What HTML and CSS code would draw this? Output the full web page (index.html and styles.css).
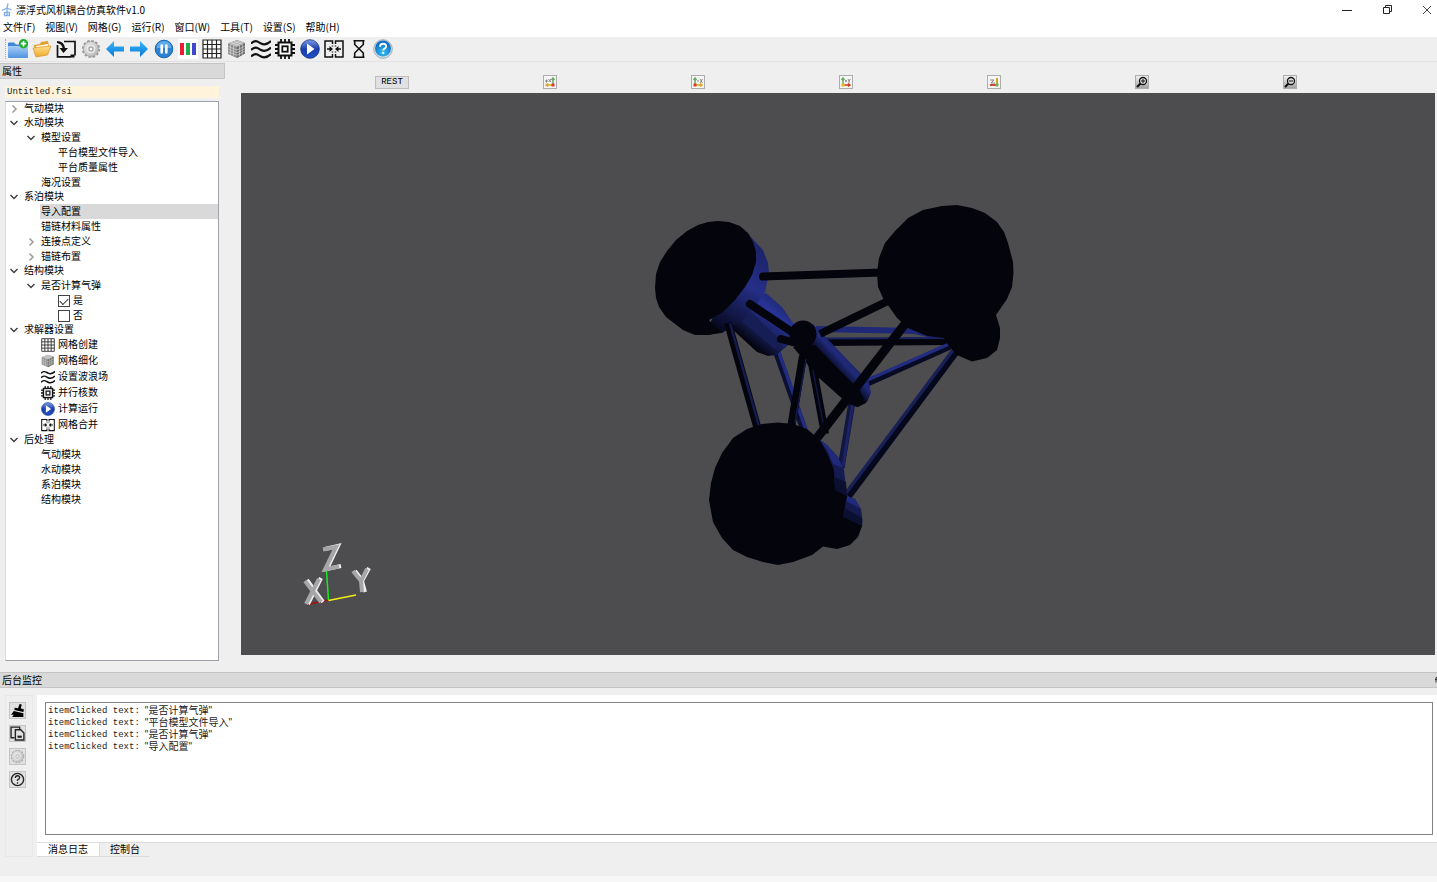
FILE: index.html
```html
<!DOCTYPE html>
<html lang="zh-CN">
<head>
<meta charset="utf-8">
<title>漂浮式风机耦合仿真软件v1.0</title>
<link rel="stylesheet" href="styles.css">
</head>
<body>
<svg class="sprite" aria-hidden="true">
  <defs>
    <linearGradient id="blueV" x1="0" y1="0" x2="0" y2="1"><stop offset="0" stop-color="#a9cdf4"/><stop offset="1" stop-color="#4e93e0"/></linearGradient>
    <linearGradient id="arrowV" x1="0" y1="0" x2="0" y2="1"><stop offset="0" stop-color="#3db4f7"/><stop offset="1" stop-color="#0679d8"/></linearGradient>
    <linearGradient id="goldV" x1="0" y1="0" x2="0" y2="1"><stop offset="0" stop-color="#ffe08a"/><stop offset="1" stop-color="#eda92b"/></linearGradient>
    <linearGradient id="playV" x1="0" y1="0" x2="0" y2="1"><stop offset="0" stop-color="#7f9ee8"/><stop offset=".5" stop-color="#1b3fae"/><stop offset="1" stop-color="#1d50c4"/></linearGradient>
    <linearGradient id="gearV" x1="0" y1="0" x2="1" y2="1"><stop offset="0" stop-color="#ececec"/><stop offset="1" stop-color="#b4b4b4"/></linearGradient>
    <radialGradient id="helpV" cx=".5" cy=".75" r=".6"><stop offset="0" stop-color="#39c4f5"/><stop offset="1" stop-color="#0d6fc4"/></radialGradient>
  </defs>
  <symbol id="i-new" viewBox="0 0 20 20">
    <path d="M0 4.500q0-1 1-1h5l2 2h10q1 0 1 1v3H0z" fill="#3f86d8"/>
    <rect x="0" y="7" width="20" height="12" rx="1" fill="url(#blueV)"/>
    <circle cx="15.500" cy="4.700" r="4.700" fill="#1fae2c"/><path d="M15.500 2v5.400M12.800 4.700h5.400" stroke="#fff" stroke-width="1.700"/>
  </symbol>
  <symbol id="i-open" viewBox="0 0 20 20">
    <path d="M2 6l6-1 1-2 7-1 1 6-2 8H3z" fill="#e3a02f"/><path d="M4 7l12-2v5H4z" fill="#fff7dc"/>
    <path d="M1 9l13-1.500L19 7l-3.500 9L4 18z" fill="url(#goldV)" stroke="#d9942a" stroke-width=".7"/>
  </symbol>
  <symbol id="i-save" viewBox="0 0 20 20">
    <path d="M8 2.500h11v14M1.500 6v11.800H15" fill="none" stroke="#111" stroke-width="1.700"/><path d="M14.500 15.500h4v3h-4z" fill="#111"/>
    <path d="M1 2q7 0 8 7h3l-4.500 5L3.500 9h3Q6 5 1 4z" fill="#111"/>
  </symbol>
  <symbol id="i-gear" viewBox="0 0 20 20">
    <circle cx="10" cy="10" r="8.200" fill="none" stroke="#9a9a9a" stroke-width="1.800" stroke-dasharray="2.600 1.693"/>
    <circle cx="10" cy="10" r="7.500" fill="url(#gearV)" stroke="#979797" stroke-width=".7"/><circle cx="10" cy="10" r="4" fill="#d6d6d6" stroke="#f4f4f4" stroke-width=".8"/><circle cx="10" cy="10" r="2" fill="#fafafa" stroke="#808080" stroke-width=".8"/>
  </symbol>
  <symbol id="i-back" viewBox="0 0 20 20"><path d="M1 10l8-8v5.500h10v5H9V18z" fill="url(#arrowV)"/></symbol>
  <symbol id="i-next" viewBox="0 0 20 20"><path d="M19 10l-8-8v5.500H1v5h10V18z" fill="url(#arrowV)"/></symbol>
  <symbol id="i-pause" viewBox="0 0 20 20"><circle cx="10" cy="10" r="8.800" fill="#2b83d2" stroke="#1768b6"/><path d="M2.500 9a7.500 7 0 0 1 15 0z" fill="#61aae8"/><path d="M7.700 6.500v7M12.300 6.500v7" stroke="#fff" stroke-width="2.600" stroke-linecap="round"/></symbol>
  <symbol id="i-bars" viewBox="0 0 20 20"><path fill="#fff" d="M0 0h20v20H0z"/><path fill="#ed1c2e" d="M2 4h4v12H2z"/><path fill="#22ad4c" d="M8 4h4v12H8z"/><path fill="#3f48cc" d="M14 4h4v12h-4z"/></symbol>
  <symbol id="i-grid" viewBox="0 0 20 20"><path fill="#fff" d="M.5.500h19v19H.5z"/><path d="M1 1h18v18H1zM5.500 1v18M10 1v18M14.500 1v18M1 5.500h18M1 10h18M1 14.500h18" fill="none" stroke="#222" stroke-width="1.200"/></symbol>
  <symbol id="i-cube" viewBox="0 0 20 20"><path d="M1 4.500L10 1l8 3v10.500L10 19l-9-4z" fill="#8d8d8d"/><path d="M1 4.500L10 1l8 3-8 4z" fill="#b4b4b4"/><path d="M10 8l8-4v10.500L10 19z" fill="#6d6d6d"/><path d="M1 7.300l9 3.700 8-4M1 10l9 3.700 8-4M1 12.700l9 3.600 8-4.300M3.500 5.500v10.300M6.500 6.700v10.500M12.500 7v10.500M15.300 5.500V16M4 3.500L13 7M7 2.300l8.500 3.200M4 5.500l9-3.500M7 6.700L15.700 3" fill="none" stroke="#dcdcdc" stroke-width=".6"/></symbol>
  <symbol id="i-wave" viewBox="0 0 20 20"><g fill="none" stroke="#111" stroke-width="2.200"><path d="M0 4.500C5 0 7 3 10 4.500S16 6 20 2"/><path d="M0 11C5 6.500 7 9.500 10 11s6 1.500 10-2.500"/><path d="M0 17.500C5 13 7 16 10 17.500s6 1.500 10-2.500"/></g></symbol>
  <symbol id="i-chip" viewBox="0 0 20 20"><path d="M6 0v20M10 0v20M14 0v20M0 6h20M0 10h20M0 14h20" stroke="#111" stroke-width="1.800"/><rect x="3.500" y="3.500" width="13" height="13" fill="#fff" stroke="#111" stroke-width="2"/><rect x="7.300" y="7.300" width="5.400" height="5.400" fill="#fff" stroke="#111" stroke-width="1.800"/></symbol>
  <symbol id="i-play" viewBox="0 0 20 20"><circle cx="10" cy="10" r="9.300" fill="url(#playV)" stroke="#16307c" stroke-width=".8"/><path d="M7 4.500l7.500 5.500L7 15.500z" fill="#fff"/></symbol>
  <symbol id="i-merge" viewBox="0 0 20 20"><path d="M8.500 5V2H1v16h7.500v-3M11.500 5V2H19v16h-7.500v-3M8.500 6.500v1M11.500 6.500v1M8.500 12.500v1M11.500 12.500v1" fill="none" stroke="#111" stroke-width="1.500"/><path d="M3 10h3M17 10h-3" stroke="#111" stroke-width="1.600"/><path d="M5.500 7L9 10l-3.500 3zM14.500 7L11 10l3.500 3z" fill="#111"/></symbol>
  <symbol id="i-hour" viewBox="0 0 20 20"><path d="M4.500 1.700h11M4.500 18.300h11M5.700 2v3.500L14.300 14v4M14.300 2v3.500L5.700 14v4" fill="none" stroke="#111" stroke-width="1.600"/></symbol>
  <symbol id="i-help" viewBox="0 0 20 20"><circle cx="10" cy="10" r="9.300" fill="#dce4e9" stroke="#8b9aa5" stroke-width=".8"/><circle cx="10" cy="9.500" r="8" fill="url(#helpV)"/><path d="M7 7.800q0-3 3.200-3t3 2.500q0 1.700-2 2.500-1 .5-1 1.700M10.200 13v2" fill="none" stroke="#fff" stroke-width="1.900"/></symbol>
  <symbol id="i-down" viewBox="0 0 10 10"><path d="M1.500 3L5 6.500 8.500 3" fill="none" stroke="#404040" stroke-width="1.500"/></symbol>
  <symbol id="i-right" viewBox="0 0 10 10"><path d="M3.500 1.500L7 5 3.500 8.500" fill="none" stroke="#9a9a9a" stroke-width="1.500"/></symbol>
</svg>

<header class="titlebar">
  <svg class="logo" viewBox="0 0 12 14" aria-hidden="true"><g fill="none" stroke="#82aee6" stroke-width="1.300"><path d="M6 5v7M6 5l1-4.500M6 5L1 7.500M6 5l4.500 2M3 12.500h6M3.500 9v3M8.500 9v3M3.500 9.500h5"/></g></svg>
  <h1 class="title">漂浮式风机耦合仿真软件v1.0</h1>
  <div class="window-buttons">
    <button aria-label="最小化"><svg viewBox="0 0 10 10"><path d="M0 5.500h10" stroke="#222"/></svg></button>
    <button aria-label="还原"><svg viewBox="0 0 10 10"><path d="M1.500 2.500h6v6h-6zM3.500 2.500v-2h6v6h-2" fill="none" stroke="#222"/></svg></button>
    <button aria-label="关闭"><svg viewBox="0 0 10 10"><path d="M1 1l8 8M9 1L1 9" stroke="#444"/></svg></button>
  </div>
</header>

<nav class="menubar" aria-label="菜单">
  <button>文件(F)</button><button>视图(V)</button><button>网格(G)</button><button>运行(R)</button><button>窗口(W)</button><button>工具(T)</button><button>设置(S)</button><button>帮助(H)</button>
</nav>

<div class="toolbar" role="toolbar" aria-label="工具栏">
  <div class="tool-group"><button aria-label="新建"><svg><use href="#i-new"/></svg></button><button aria-label="打开"><svg><use href="#i-open"/></svg></button><button aria-label="保存"><svg><use href="#i-save"/></svg></button></div>
  <div class="tool-group"><button aria-label="设置"><svg><use href="#i-gear"/></svg></button><button aria-label="后退"><svg><use href="#i-back"/></svg></button><button aria-label="前进"><svg><use href="#i-next"/></svg></button></div>
  <div class="tool-group"><button aria-label="暂停"><svg><use href="#i-pause"/></svg></button><button aria-label="颜色"><svg><use href="#i-bars"/></svg></button><button aria-label="网格创建"><svg><use href="#i-grid"/></svg></button></div>
  <div class="tool-group"><button aria-label="网格细化"><svg><use href="#i-cube"/></svg></button><button aria-label="设置波浪场"><svg><use href="#i-wave"/></svg></button><button aria-label="并行核数"><svg><use href="#i-chip"/></svg></button></div>
  <div class="tool-group"><button aria-label="计算运行"><svg><use href="#i-play"/></svg></button><button aria-label="网格合并"><svg><use href="#i-merge"/></svg></button></div>
  <div class="tool-group"><button aria-label="等待"><svg><use href="#i-hour"/></svg></button><button aria-label="帮助"><svg><use href="#i-help"/></svg></button></div>
</div>

<main class="workspace">
  <aside class="properties">
    <h2 class="dock-title">属性</h2>
    <div class="properties-body">
      <input class="file-name" type="text" value="Untitled.fsi" aria-label="文件名">
      <ul class="tree" role="tree">
        <li class="row top" role="treeitem"><svg class="arrow"><use href="#i-right"/></svg>气动模块</li>
        <li class="row top" role="treeitem"><svg class="arrow"><use href="#i-down"/></svg>水动模块</li>
        <li class="row level2" role="treeitem"><svg class="arrow"><use href="#i-down"/></svg>模型设置</li>
        <li class="row level3" role="treeitem">平台模型文件导入</li>
        <li class="row level3" role="treeitem">平台质量属性</li>
        <li class="row leaf" role="treeitem">海况设置</li>
        <li class="row top" role="treeitem"><svg class="arrow"><use href="#i-down"/></svg>系泊模块</li>
        <li class="row leaf selected" role="treeitem" aria-selected="true"><span>导入配置</span></li>
        <li class="row leaf" role="treeitem">锚链材料属性</li>
        <li class="row level2" role="treeitem"><svg class="arrow"><use href="#i-right"/></svg>连接点定义</li>
        <li class="row level2" role="treeitem"><svg class="arrow"><use href="#i-right"/></svg>锚链布置</li>
        <li class="row top" role="treeitem"><svg class="arrow"><use href="#i-down"/></svg>结构模块</li>
        <li class="row level2" role="treeitem"><svg class="arrow"><use href="#i-down"/></svg>是否计算气弹</li>
        <li class="row level3" role="treeitem"><label><input type="checkbox" checked>是</label></li>
        <li class="row level3" role="treeitem"><label><input type="checkbox">否</label></li>
        <li class="row top" role="treeitem"><svg class="arrow"><use href="#i-down"/></svg>求解器设置</li>
        <li class="row leaf tall" role="treeitem"><svg class="icon"><use href="#i-grid"/></svg>网格创建</li>
        <li class="row leaf tall" role="treeitem"><svg class="icon"><use href="#i-cube"/></svg>网格细化</li>
        <li class="row leaf tall" role="treeitem"><svg class="icon"><use href="#i-wave"/></svg>设置波浪场</li>
        <li class="row leaf tall" role="treeitem"><svg class="icon"><use href="#i-chip"/></svg>并行核数</li>
        <li class="row leaf tall" role="treeitem"><svg class="icon"><use href="#i-play"/></svg>计算运行</li>
        <li class="row leaf tall" role="treeitem"><svg class="icon"><use href="#i-merge"/></svg>网格合并</li>
        <li class="row top" role="treeitem"><svg class="arrow"><use href="#i-down"/></svg>后处理</li>
        <li class="row leaf" role="treeitem">气动模块</li>
        <li class="row leaf" role="treeitem">水动模块</li>
        <li class="row leaf" role="treeitem">系泊模块</li>
        <li class="row leaf" role="treeitem">结构模块</li>
      </ul>
    </div>
  </aside>

  <section class="viewer" aria-label="三维视图">
    <div class="view-buttons">
      <button class="reset">REST</button>
      <button class="view" aria-label="+X"><svg viewBox="0 0 12 12"><path d="M1 5h3M2.500 3.500v3M4.500 3l2.500 3M7 3L4.500 6" stroke="#888"/><path d="M9 8V2M7.500 4L9 2l1.500 2" stroke="#6cac67" stroke-width="1.500" fill="none"/><path d="M8 9H2M4 7.500L2 9l2 1.500" stroke="#d8a823" stroke-width="1.500" fill="none"/><path d="M7.500 7.500h3v3h-3z" fill="#df3b24"/></svg></button>
      <button class="view" aria-label="-X"><svg viewBox="0 0 12 12"><path d="M5 5h2M8 3l2.500 4M10.500 3L8 7" stroke="#888"/><path d="M3 8V2M1.500 4L3 2l1.500 2" stroke="#6cac67" stroke-width="1.500" fill="none"/><path d="M4 9h6M8 7.500L10 9l-2 1.500" stroke="#d8a823" stroke-width="1.500" fill="none"/><path d="M1.500 7.500h3v3h-3z" fill="#df3b24"/></svg></button>
      <button class="view" aria-label="+Y"><svg viewBox="0 0 12 12"><path d="M5 5h2M6 4v2M8 3l1 2 1.500-2M9 5v2" stroke="#888" fill="none"/><path d="M3 8V2M1.500 4L3 2l1.500 2" stroke="#6cac67" stroke-width="1.500" fill="none"/><path d="M4 9h6M8 7.500L10 9l-2 1.500" stroke="#c84324" stroke-width="1.500" fill="none"/><path d="M1.500 7.500h3v3h-3z" fill="#e5b821"/></svg></button>
      <button class="view" aria-label="Z"><svg viewBox="0 0 12 12"><path d="M2 4h4L3 7h4" stroke="#888" fill="none"/><path d="M9 8V2" stroke="#d5a51d" stroke-width="2"/><path d="M8 9H2" stroke="#d24931" stroke-width="2"/><path d="M7.500 7.500h3v3h-3z" fill="#71af5c"/></svg></button>
      <button class="view zoom" aria-label="放大"><svg viewBox="0 0 12 12"><path d="M1 11l4-4" stroke="#111" stroke-width="2"/><circle cx="7" cy="5" r="3.500" fill="#ddd" stroke="#111" stroke-width="1.300"/><path d="M5 5h4M7 3v4" stroke="#111"/></svg></button>
      <button class="view zoom" aria-label="缩小"><svg viewBox="0 0 12 12"><path d="M1 11l4-4" stroke="#111" stroke-width="2"/><circle cx="7" cy="5" r="3.500" fill="#ddd" stroke="#111" stroke-width="1.300"/><path d="M5 5h4" stroke="#111"/></svg></button>
    </div>
    <div class="canvas">
      <svg class="scene" viewBox="241 93 1194 562" role="img" aria-label="浮式平台模型">
        <defs>
          <linearGradient id="side" gradientUnits="userSpaceOnUse" x1="764" y1="256" x2="725" y2="330"><stop offset="0" stop-color="#1c246b"/><stop offset=".4" stop-color="#252f87"/><stop offset="1" stop-color="#080a22"/></linearGradient>
          <linearGradient id="pontoon" gradientUnits="userSpaceOnUse" x1="783" y1="308" x2="752" y2="346"><stop offset="0" stop-color="#212b7b"/><stop offset=".2" stop-color="#283398"/><stop offset=".7" stop-color="#151b4d"/><stop offset="1" stop-color="#03040d"/></linearGradient>
          <linearGradient id="column" gradientUnits="userSpaceOnUse" x1="846" y1="353" x2="831" y2="367"><stop offset="0" stop-color="#1b2365"/><stop offset=".4" stop-color="#202a7a"/><stop offset="1" stop-color="#05071a"/></linearGradient>
        </defs>
        <!-- rear cross braces -->
        <path d="M816 329L915 331L945 338" fill="none" stroke="#1f2876" stroke-width="6"/>
        <path d="M822 342.500L950 341.500" stroke="#03040c" stroke-width="7"/><path d="M822 338.500L945 338" stroke="#1a215f" stroke-width="2"/>
        <path d="M865 384L950 346" stroke="#070a22" stroke-width="7"/><path d="M864 381.500L949 344" stroke="#222c80" stroke-width="3.500"/>
        <path d="M848 496L956 351" stroke="#05071a" stroke-width="8"/><path d="M846 493L953 350" stroke="#192058" stroke-width="3.500"/>
        <path d="M776 350L804 430" stroke="#0b0f32" stroke-width="7"/><path d="M778 350L806 430" stroke="#222c80" stroke-width="3.500"/>
        <path d="M852 402L841 468" stroke="#11163f" stroke-width="7"/><path d="M853 402L843 466" stroke="#1b2365" stroke-width="3"/>
        <!-- upper left column -->
        <path d="M766 293L782 307L793 323L796 338L786 347L776 355L768 356L757 352L732 329L742 302Z" fill="url(#pontoon)"/>
        <path d="M751 312L782 342L775 349L739 319Z" fill="#171e55"/>
        <path d="M749 235L763 250L768 263L769 273L765 292L755 306L743 320L722 333L705 335Z" fill="url(#side)"/>
        <path d="M655 288L656 274L660 262L667 251L676 240L687 231L698 225L708 222L718 221L729 222L740 226L748 233L753 242L756 252L756 262L752 275L745 287L735 300L723 312L709 320L713 325L723 332L709 335L695 335L683 330L666 317L659 307L656 298Z" fill="#03040c"/>
        <path d="M728 323L758 430" stroke="#03040c" stroke-width="8"/><path d="M730 323L760 430" stroke="#151b4d" stroke-width="2.500"/>
        <path d="M763 276.500L882 272.500M750 304L792 332M781 339L796 343" stroke="#03040c" stroke-width="8" stroke-linecap="round"/>
        <!-- centre column -->
        <path d="M813 324L869 382L871 393L867 402L858 407L850 404L796 350Z" fill="url(#column)"/>
        <path d="M793 347L815 345L860 391L866 403L857 407L847 403L818 377Z" fill="#03040c"/>
        <path d="M820 334L888 301" stroke="#03040c" stroke-width="8"/>
        <path d="M803 356L791 428M811 358L825 434" stroke="#03040c" stroke-width="8"/><path d="M806 359L795 423M813 370L824 428" stroke="#121743" stroke-width="1.500"/>
        <path d="M908 320L817 438" stroke="#03040c" stroke-width="9"/>
        <circle cx="803" cy="334" r="13.500" fill="#03040c"/>
        <!-- right column -->
        <path d="M877 273L879 258L885 243L895 231L908 218L923 210L942 206L957 205L972 208L985 213L997 222L1004 232L1008 243L1013 262L1013.500 273L1012 287L1007 299L996 315L1000 328L1000 338L997 350L987 358L972 361.500L957 355L948 345L944 338L927 336L908 328L897 318L883 298L878 287Z" fill="#03040c"/>
        <!-- lower column -->
        <path d="M816 437L827 445L838 457L844 470L847 496L855 499L861 509L862.500 520L862 527L843 518L833 492Z" fill="#151b50"/>
        <path d="M816 437L827 445L838 457L843 468L833 464L827 450Z" fill="#20297a"/>
        <path d="M835 477L846 482L847 496L835 491ZM845 508L862 518L862 527L843 518Z" fill="#0c1030"/>
        <path d="M847 496L855 499L861 509L846 501Z" fill="#20297a"/>
        <path d="M709 500L711 483L715 468L722 453L733 438L747 429L762 424L778 422.500L793 424L807 429L820 440L828 455L834 470L835 490L847 496L843 517L862 526L858 537L850 545L837 549L823 546.500L812 555L793 562L778 565L763 562L747 557L733 550L722 538L713 522Z" fill="#03040c"/>
        <!-- axes triad -->
        <path d="M328.500 600L307 604.500" stroke="#a20e12" stroke-width="1.500"/><path d="M328.500 600L326.500 571" stroke="#13ed1c" stroke-width="1.500"/><path d="M328.500 600.500L356 595" stroke="#f4ed13" stroke-width="1.500"/>
        <g fill="none" stroke-width="4"><path d="M325 549L338 546L327 569L341 566" stroke="#eee"/><path d="M323 549.500L336 547L325 569.500L339 566.500" stroke="#a6a6a8"/>
        <path d="M307 580L323 602M321 578L308 604" stroke="#eee"/><path d="M305 581L321 602M319 579L306 604" stroke="#a6a6a8"/>
        <path d="M355 571L362 580M369 568L362 581L365 592" stroke="#eee"/><path d="M353 571L361 581M367 569L361 581L362 592" stroke="#a6a6a8"/></g>
      </svg>
    </div>
  </section>
</main>

<section class="monitor">
  <div class="dock-bar">
    <h2 class="dock-title">后台监控</h2>
    <button class="float" aria-label="浮动"><svg viewBox="0 0 2 6"><path d="M2 .5H1v5M0 2.500h2" fill="none" stroke="#333"/></svg></button>
  </div>
  <div class="monitor-body">
    <div class="side-tools" role="toolbar" aria-label="日志工具">
      <button aria-label="清除"><svg viewBox="0 0 14 14"><path d="M9 1l2 .5L10 5l3 1-.5 2.500L4 6.500 4.500 4.500 7.500 5zM3.500 7.500l9 2V13H2l1.500-2H1z" fill="#000"/></svg></button>
      <button aria-label="复制"><svg viewBox="0 0 14 14"><path d="M9 3V1H1v10h3M5 3.500h5l3 3V13H5z" fill="none" stroke="#222" stroke-width="1.300"/><path d="M7 9h4v2H7z" fill="#222"/></svg></button>
      <button class="faded" aria-label="设置"><svg><use href="#i-gear"/></svg></button>
      <button aria-label="帮助"><svg viewBox="0 0 14 14"><circle cx="7" cy="7" r="5.700" fill="none" stroke="#222" stroke-width="1.300"/><path d="M5 5.500q0-2 2-2t2 1.800Q9 6.500 7 7.300v1.200M7 9.500V11" fill="none" stroke="#222" stroke-width="1.200"/></svg></button>
    </div>
    <div class="log-area">
      <div class="log-page">
        <div class="log" role="log">
          <p><span class="mono">itemClicked text:</span><span>"是否计算气弹"</span></p>
          <p><span class="mono">itemClicked text:</span><span>"平台模型文件导入"</span></p>
          <p><span class="mono">itemClicked text:</span><span>"是否计算气弹"</span></p>
          <p><span class="mono">itemClicked text:</span><span>"导入配置"</span></p>
        </div>
      </div>
      <div class="tabs" role="tablist">
        <button class="tab active" role="tab" aria-selected="true">消息日志</button><button class="tab" role="tab" aria-selected="false">控制台</button>
      </div>
    </div>
  </div>
</section>
<footer class="statusbar"></footer>
</body>
</html>
```

FILE: styles.css
```css
* { box-sizing: border-box; }

body {
  margin: 0;
  min-height: 100vh;
  display: flex;
  flex-direction: column;
  background: #efefef;
  color: #000;
  font: 10px/14px "Liberation Sans", "Noto Sans CJK SC", sans-serif;
}

button {
  margin: 0;
  padding: 0;
  border: 0;
  background: none;
  color: inherit;
  font: inherit;
}

svg { display: block; }
.sprite { position: absolute; width: 0; height: 0; }

.titlebar {
  display: flex;
  align-items: center;
  height: 20px;
  padding-right: 5px;
  background: #fff;
}
.logo { width: 12px; height: 14px; margin: 0 3px 0 1px; }
.title { margin: 0; font: 10px/14px "Noto Sans CJK SC", sans-serif; }
.window-buttons { display: flex; gap: 30px; margin-left: auto; }
.window-buttons svg { width: 10px; height: 10px; }

.menubar {
  display: flex;
  align-items: flex-start;
  gap: 10px;
  height: 17px;
  padding: 0 3px;
  background: #fff;
  font-family: "Noto Sans CJK SC", sans-serif;
}

.toolbar {
  display: flex;
  align-items: center;
  gap: 5px;
  height: 25px;
  padding-left: 9px;
  border-bottom: 1px solid #e3e3e3;
}
.toolbar::before {
  content: "";
  align-self: stretch;
  margin: 2px -3px 2px -4px;
  border-left: 1px dotted #aaa;
}
.tool-group { display: flex; gap: 4px; }
.tool-group svg { width: 20px; height: 20px; }

.workspace { flex: 1; display: flex; gap: 16px; padding: 1px 2px 17px 0; }

.dock-title {
  margin: 0;
  height: 16px;
  padding-left: 2px;
  border: 1px solid #c4c4c4;
  border-left: 0;
  background: #d9d9d9;
  font: 10px/14px "Noto Sans CJK SC", sans-serif;
}

.properties { width: 225px; display: flex; flex-direction: column; }
.properties-body {
  flex: 1;
  display: flex;
  flex-direction: column;
  gap: 3px;
  padding: 7px 6px 0 5px;
  margin-bottom: -6px;
}
.file-name {
  width: 100%;
  height: 12px;
  padding: 0 2px;
  border: 0;
  background: #fff3dc;
  color: #222;
  font: 9px/12px "Liberation Mono", monospace;
}
.tree {
  flex: 1;
  margin: 0;
  padding: 0;
  border: 1px solid #a0a0a8;
  border-left-color: #dcdcdc;
  background: #fff;
  list-style: none;
}
.row { display: flex; align-items: center; height: 15px; padding-left: 35px; }
.row.top { height: 14px; padding-left: 3px; }
.row.level2 { padding-left: 20px; }
.row.level3 { padding-left: 52px; }
.row.tall { height: 16px; }
.row.selected { background: linear-gradient(#d9d9d9, #d9d9d9) 34px 0 no-repeat; }
.row label { display: flex; align-items: center; gap: 3px; }
.arrow { width: 10px; height: 10px; margin-right: 5px; }
.icon { width: 14px; height: 14px; margin-right: 3px; }
.row input {
  appearance: none;
  width: 12px;
  height: 12px;
  margin: 0;
  border: 1px solid #444;
  background: #fff;
}
.row input:checked::before {
  content: "";
  display: block;
  width: 7px;
  height: 4px;
  margin: 2px 1px;
  border: solid #333;
  border-width: 0 0 1px 1px;
  transform: rotate(-45deg);
}

.viewer { flex: 1; min-width: 0; display: flex; flex-direction: column; }
.view-buttons {
  display: flex;
  align-items: center;
  justify-content: space-evenly;
  height: 30px;
  padding-top: 8px;
  padding-right: 4px;
}
.reset {
  width: 34px;
  height: 13px;
  border: 1px solid #bdbdbd;
  background: #e1e1e1;
  font: 9px/11px "Liberation Mono", monospace;
}
.view { width: 14px; height: 14px; border: 1px solid #adadad; background: #f5f5f5; }
.view svg { width: 12px; height: 12px; }
.zoom { background: linear-gradient(#f2f2f2, #a3a3a3); }
.canvas { flex: 1; display: flex; background: #4d4d4f; }
.scene { flex: 1; min-width: 0; }

.dock-bar {
  display: flex;
  align-items: center;
  border: 1px solid #c4c4c4;
  border-width: 1px 0;
  background: #d9d9d9;
}
.dock-bar .dock-title { flex: 1; height: 14px; border: 0; }
.float svg { width: 2px; height: 6px; }

.monitor-body { display: flex; gap: 4px; padding: 7px 0 0 5px; }
.side-tools {
  width: 28px;
  display: flex;
  flex-direction: column;
  align-items: center;
  gap: 6px;
  padding: 6px 3px 0 0;
  border: 1px solid #e8e8e8;
}
.side-tools button {
  width: 17px;
  height: 17px;
  border: 1px solid #c4c4c4;
  background: #e1e1e1;
}
.side-tools svg { width: 15px; height: 15px; }
.side-tools .faded svg { opacity: 0.7; }

.log-area { flex: 1; min-width: 0; }
.log-page {
  padding: 7px 4px 7px 8px;
  border-bottom: 1px solid #dcdcdc;
  background: #fff;
}
.log {
  min-height: 133px;
  padding: 2px;
  border: 1px solid #828282;
  color: #222;
}
.log p { display: flex; gap: 5px; margin: 0; line-height: 12px; }
.log .mono { font-family: "Liberation Mono", monospace; font-size: 9px; }

.tabs { display: flex; }
.tab {
  height: 14px;
  padding: 0 10px;
  border-bottom: 1px solid #dcdcdc;
  line-height: 13px;
}
.tab.active { padding: 0 11px; border-right: 1px solid #dcdcdc; background: #fff; }

.statusbar { height: 6px; margin-top: 19px; background: #f7f7f7; }
```
